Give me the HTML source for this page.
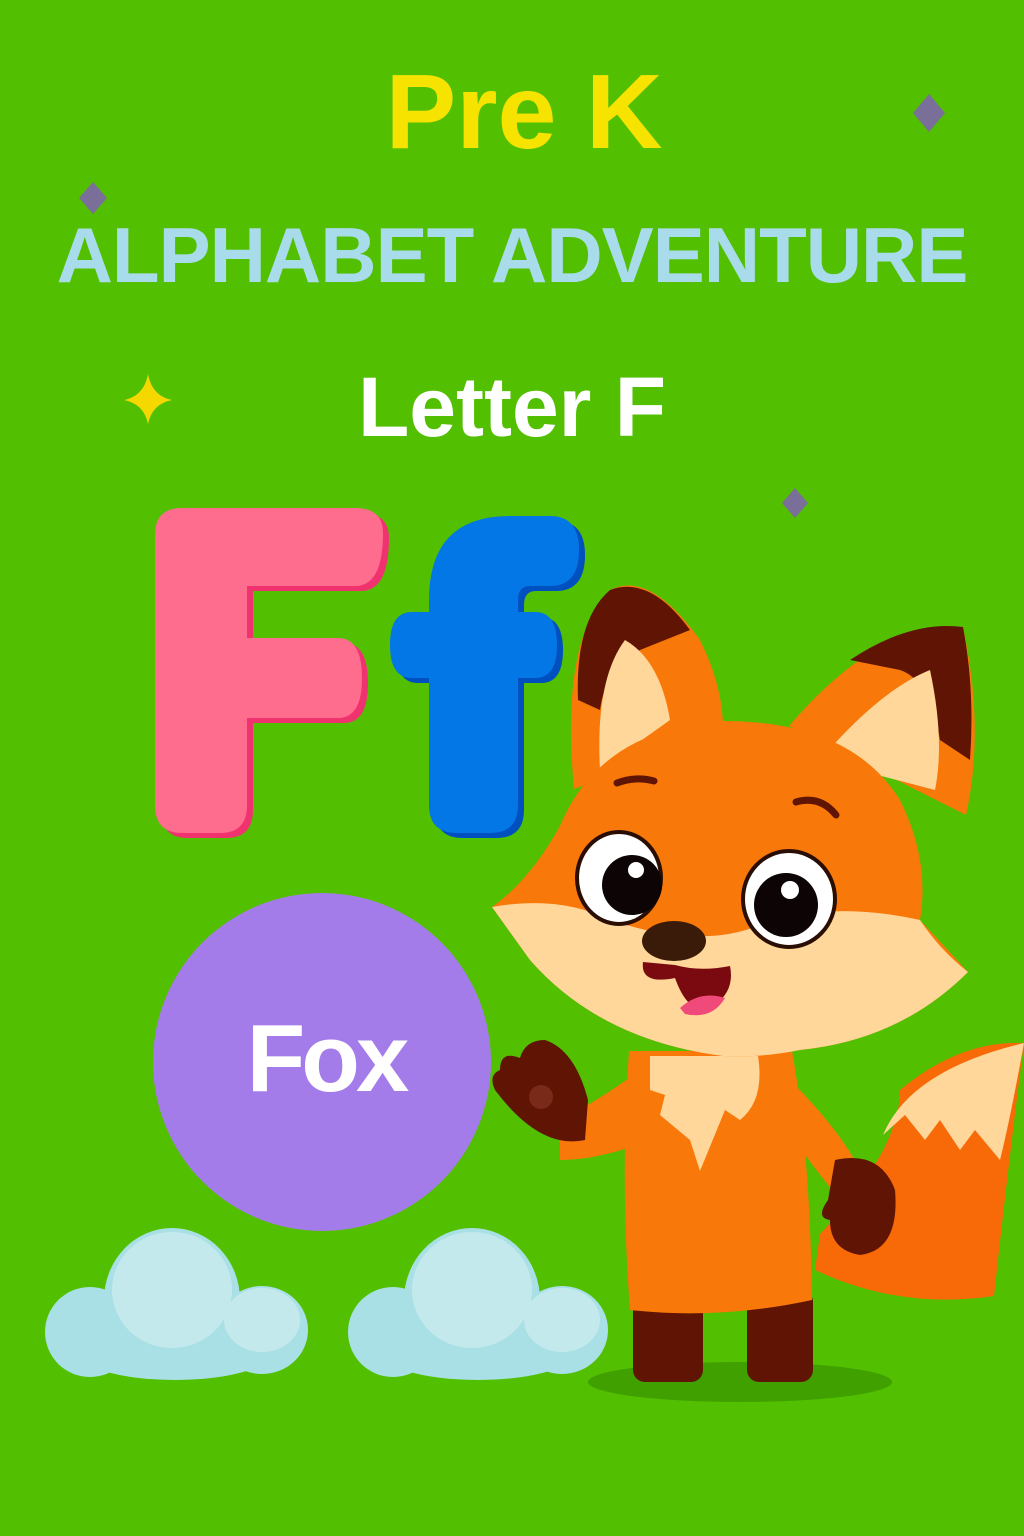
<!DOCTYPE html>
<html><head><meta charset="utf-8"><style>
html,body{margin:0;padding:0;}
body{width:1024px;height:1536px;background:#52bf00;overflow:hidden;position:relative;font-family:"Liberation Sans","DejaVu Sans",sans-serif;}
.t{position:absolute;left:0;width:1024px;text-align:center;font-weight:bold;white-space:nowrap;}
</style></head><body>
<svg width="1024" height="1536" style="position:absolute;left:0;top:0">
<path d="M929 94 L945 113 L929 132 L913 113Z" fill="#7a6f99"/>
<path d="M93 182 L107 198 L93 214 L79 198Z" fill="#7a6f99"/>
<path d="M795 488 L808 503 L795 518 L782 503Z" fill="#7a6f99"/>
<path d="M148 374 Q152 396 172 400 Q152 404 148 424 Q144 404 124 400 Q144 396 148 374Z" fill="#f5d800"/>
<g transform="translate(6,5)" fill="#f0336f">
<path d="M182 508 H355 Q383 508 383 533 Q383 586 355 586 H247 V638 H338 Q362 638 362 678 Q362 718 338 718 H247 V805 Q247 833 220 833 H182 Q155 833 155 805 V535 Q155 508 182 508Z"/>
</g>
<path d="M182 508 H355 Q383 508 383 533 Q383 586 355 586 H247 V638 H338 Q362 638 362 678 Q362 718 338 718 H247 V805 Q247 833 220 833 H182 Q155 833 155 805 V535 Q155 508 182 508Z" fill="#ff6d8e"/>
<g transform="translate(6,5)" fill="#0050c0">
<path d="M429 612 V600 Q429 516 510 516 H550 Q579 516 579 550 Q579 586 550 586 H530 Q518 586 518 600 V612 H535 Q557 612 557 645 Q557 678 535 678 H518 V805 Q518 833 490 833 H457 Q429 833 429 805 V678 H412 Q390 678 390 645 Q390 612 412 612Z"/>
</g>
<path d="M429 612 V600 Q429 516 510 516 H550 Q579 516 579 550 Q579 586 550 586 H530 Q518 586 518 600 V612 H535 Q557 612 557 645 Q557 678 535 678 H518 V805 Q518 833 490 833 H457 Q429 833 429 805 V678 H412 Q390 678 390 645 Q390 612 412 612Z" fill="#0477e6"/>
<circle cx="322" cy="1062" r="169" fill="#a47cea"/>
<g fill="#a9e0e6">
<ellipse cx="90" cy="1332" rx="45" ry="45"/><ellipse cx="172" cy="1300" rx="68" ry="72"/><ellipse cx="262" cy="1330" rx="46" ry="44"/><ellipse cx="175" cy="1350" rx="100" ry="30"/>
<ellipse cx="393" cy="1332" rx="45" ry="45"/><ellipse cx="472" cy="1300" rx="68" ry="72"/><ellipse cx="562" cy="1330" rx="46" ry="44"/><ellipse cx="478" cy="1350" rx="100" ry="30"/>
</g>
<g fill="#c4e9ec">
<ellipse cx="172" cy="1290" rx="60" ry="58"/><ellipse cx="262" cy="1320" rx="38" ry="32"/><ellipse cx="472" cy="1290" rx="60" ry="58"/><ellipse cx="562" cy="1320" rx="38" ry="32"/>
</g>
<ellipse cx="740" cy="1382" rx="152" ry="20" fill="#3fa000"/>
<path d="M820 1234 Q900 1150 900 1090 Q960 1040 1024 1043 Q1010 1150 994 1296 Q900 1310 815 1270Z" fill="#f86a08"/>
<path d="M883 1135 Q910 1070 1024 1043 Q1010 1120 1000 1160 L975 1130 L960 1150 L940 1120 L925 1140 L905 1115Z" fill="#ffd79a"/>
<rect x="633" y="1290" width="70" height="92" rx="12" fill="#5f1404"/>
<rect x="747" y="1290" width="66" height="92" rx="12" fill="#5f1404"/>
<path d="M629 1051 H792 Q810 1150 812 1300 Q720 1320 630 1310 Q620 1180 629 1051Z" fill="#f8780a"/>
<path d="M560 1120 Q600 1100 640 1070 L650 1140 Q600 1160 560 1160Z" fill="#f8780a"/>
<path d="M500 1070 Q500 1050 520 1058 Q525 1040 545 1040 Q575 1050 588 1100 L585 1140 Q540 1150 495 1090 Q488 1075 500 1070Z" fill="#5f1404"/>
<circle cx="541" cy="1097" r="12" fill="#7a2a18"/>
<path d="M790 1080 Q840 1130 860 1170 L840 1200 Q800 1150 780 1120Z" fill="#f8780a"/>
<path d="M835 1160 Q880 1150 895 1190 Q900 1250 860 1255 Q830 1250 830 1220 Q815 1218 828 1200Z" fill="#5f1404"/>
<path d="M650 1056 H758 Q765 1100 740 1120 L725 1110 L700 1171 L690 1140 L660 1115 L665 1095 L650 1090Z" fill="#ffd79a"/>
<path d="M574 789 Q560 640 610 590 Q650 570 700 640 Q725 690 723 737Z" fill="#f8780a"/>
<path d="M578 700 Q575 620 610 590 Q650 575 690 630 L640 650 Q605 670 600 710Z" fill="#5f1404"/>
<path d="M600 770 Q595 680 625 640 Q660 660 670 720Z" fill="#ffd79a"/>
<path d="M789 726 Q880 620 963 627 Q985 730 966 815Z" fill="#f8780a"/>
<path d="M850 660 Q910 620 963 627 Q975 690 970 760 L940 740 Q930 680 900 670Z" fill="#5f1404"/>
<path d="M820 760 Q880 690 930 670 Q945 740 935 790Z" fill="#ffd79a"/>
<path d="M560 826 Q600 730 720 721 Q850 720 900 800 Q930 860 920 920 L968 972 Q900 1040 800 1050 Q760 1058 723 1056 Q600 1040 530 960 L492 907 Q530 880 560 826Z" fill="#f8780a"/>
<path d="M492 907 Q560 895 610 920 Q700 950 760 925 Q830 900 920 920 Q940 950 968 972 Q900 1040 800 1050 Q760 1058 723 1056 Q600 1040 530 960Z" fill="#ffd79a"/>
<path d="M617 783 Q635 776 654 781" stroke="#5f1404" stroke-width="7" fill="none" stroke-linecap="round"/>
<path d="M796 802 Q820 795 836 815" stroke="#5f1404" stroke-width="7" fill="none" stroke-linecap="round"/>
<ellipse cx="619" cy="878" rx="42" ry="46" fill="#fff" stroke="#2a0e04" stroke-width="4"/>
<circle cx="632" cy="885" r="30" fill="#0d0505"/><circle cx="636" cy="870" r="8" fill="#fff"/>
<ellipse cx="789" cy="899" rx="46" ry="48" fill="#fff" stroke="#2a0e04" stroke-width="4"/>
<circle cx="786" cy="905" r="32" fill="#0d0505"/><circle cx="790" cy="890" r="9" fill="#fff"/>
<ellipse cx="674" cy="941" rx="32" ry="20" fill="#3a1a08"/>
<path d="M643 962 Q640 985 675 978 Q690 1020 715 1005 Q735 990 730 966 Q700 972 675 965Z" fill="#7a0a10"/>
<path d="M680 1008 Q700 990 725 998 Q712 1020 685 1014Z" fill="#f04a7a"/>
</svg>
<div class="t" style="top:52px;left:12px;font-size:106px;color:#f6e300;">Pre K</div>
<div class="t" style="top:210px;left:0px;font-size:78px;color:#a8dcea;letter-spacing:-1px;">ALPHABET ADVENTURE</div>
<div class="t" style="top:359px;left:0px;font-size:84px;color:#fff;">Letter F</div>
<div style="position:absolute;left:232px;top:1004px;width:188px;text-align:center;font-weight:bold;font-size:96px;color:#fff;letter-spacing:-4px;">Fox</div>
</body></html>
